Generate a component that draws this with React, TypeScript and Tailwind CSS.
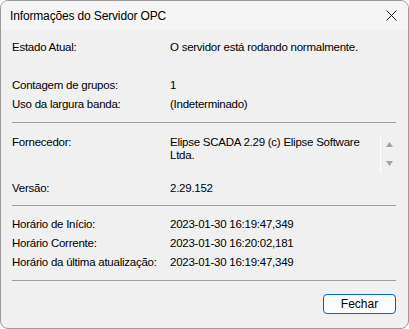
import React from 'react'

const rows = [
  { label: 'Horário de Início:', value: '2023-01-30 16:19:47,349' },
  { label: 'Horário Corrente:', value: '2023-01-30 16:20:02,181' },
  { label: 'Horário da última atualização:', value: '2023-01-30 16:19:47,349' },
]

const Row = ({ label, value }: { label: string; value: string }) => (
  <div className="flex h-[19px] items-center whitespace-nowrap">
    <div className="w-[158px] shrink-0">{label}</div>
    <div>{value}</div>
  </div>
)

const Separator = ({ className }: { className?: string }) => (
  <div className={`h-px bg-[#a0a0a0] ${className ?? ''}`} />
)

const App = () => {
  return (
    <div
      className="h-[329px] w-[409px] overflow-hidden rounded-[8px] border border-[#9b9b9b] bg-[#f0f0f0] text-[11.5px] tracking-[-0.25px] text-black"
      style={{ fontFamily: '"Liberation Sans", Arial, sans-serif' }}
    >
      <div className="flex h-[29px] items-center justify-between bg-[#f5f5f5] pl-[9px] pr-[11px]">
        <span className="text-[12px] tracking-[-0.15px]">Informações do Servidor OPC</span>
        <svg width="11" height="11" viewBox="0 0 11 11" className="text-[#1a1a1a]">
          <path d="M0.5 0.5 L10.5 10.5 M10.5 0.5 L0.5 10.5" stroke="currentColor" strokeWidth="1" />
        </svg>
      </div>

      <div className="flex flex-col pl-[11px] pr-[12px]">
        <div className="mt-[8px]">
          <Row label="Estado Atual:" value="O servidor está rodando normalmente." />
        </div>
        <div className="mt-[19px]">
          <Row label="Contagem de grupos:" value="1" />
          <Row label="Uso da largura banda:" value="(Indeterminado)" />
        </div>

        <Separator className="mt-[8px]" />

        <div className="mt-[12px] flex h-[38px]">
          <div className="w-[158px] shrink-0 pt-[1px] leading-[13px]">Fornecedor:</div>
          <div className="w-[210px] shrink-0 whitespace-nowrap pt-[1px] leading-[13px]">
            Elipse SCADA 2.29 (c) Elipse Software
            <br />
            Ltda.
          </div>
          <div className="w-px bg-white" />
          <div className="flex flex-1 flex-col items-center justify-between py-[7px] pl-[1px]">
            <svg width="7" height="5" viewBox="0 0 7 5">
              <path d="M3.5 0 L7 5 L0 5 Z" fill="#a3a3a3" />
            </svg>
            <svg width="7" height="5" viewBox="0 0 7 5">
              <path d="M0 0 L7 0 L3.5 5 Z" fill="#a3a3a3" />
            </svg>
          </div>
        </div>

        <div className="mt-[6px]">
          <Row label="Versão:" value="2.29.152" />
        </div>

        <Separator className="mt-[7px]" />

        <div className="mt-[9px]">
          {rows.map((row) => (
            <Row key={row.label} label={row.label} value={row.value} />
          ))}
        </div>

        <Separator className="mt-[8px]" />

        <div className="mt-[13px] flex justify-end">
          <button className="h-[20px] w-[73px] rounded-[4px] border border-[#0067c0] bg-[#fdfdfd] text-[12px] leading-none tracking-normal">
            Fechar
          </button>
        </div>
      </div>
    </div>
  )
}

export default App
